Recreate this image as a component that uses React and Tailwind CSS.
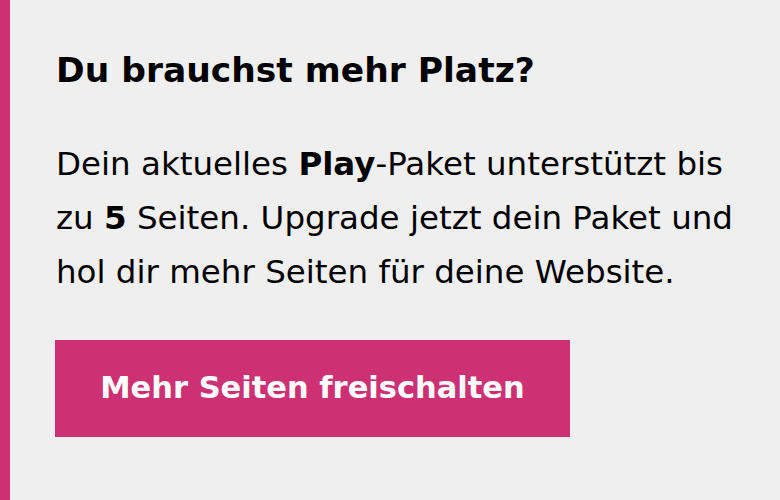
export default function App() {
  return (
    <div className="w-[780px] h-[500px] bg-[#efefef] border-l-[10px] border-[#cd3174] pl-[46px] pt-[50px] font-['DejaVu_Sans',sans-serif] text-black">
      <h2 className="text-[34.5px] leading-[40px] font-bold whitespace-nowrap">Du brauchst mehr Platz?</h2>
      <p className="mt-[47px] text-[32.5px] leading-[54px] whitespace-nowrap">
        Dein aktuelles <b className="font-bold">Play</b>-Paket unterstützt bis<br />
        zu <b className="font-bold">5</b> Seiten. Upgrade jetzt dein Paket und<br />
        hol dir mehr Seiten für deine Website.
      </p>
      <button className="mt-[41px] -ml-[1px] w-[515px] h-[97px] bg-[#cd3174] text-white text-[30.5px] leading-none font-bold flex items-center justify-center whitespace-nowrap">
        Mehr Seiten freischalten
      </button>
    </div>
  );
}
